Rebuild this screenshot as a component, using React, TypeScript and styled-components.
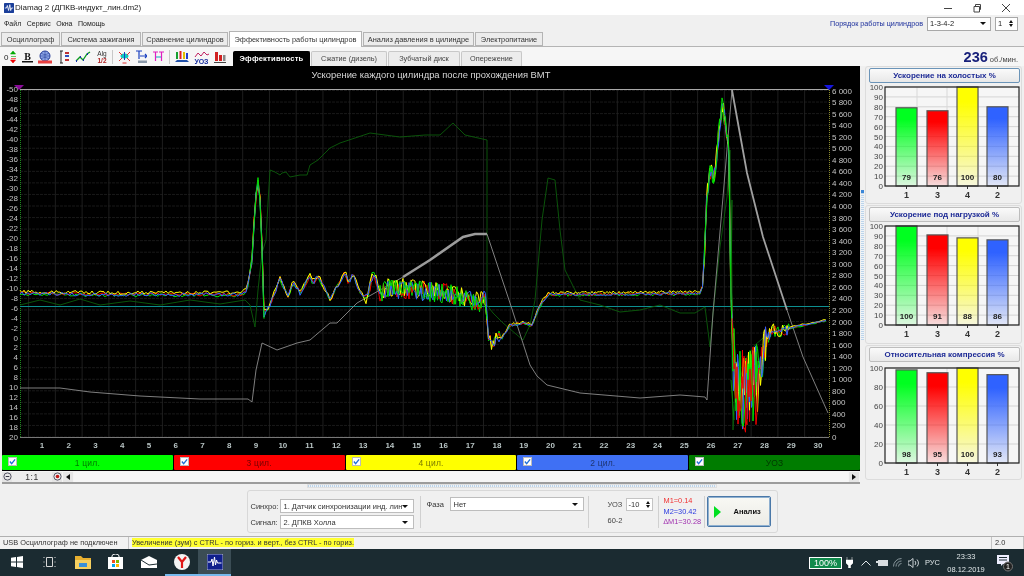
import React from "react";
import styled, { createGlobalStyle } from "styled-components";

const Global = createGlobalStyle`
  html, body { margin: 0; padding: 0; width: 1024px; height: 576px; overflow: hidden; background: #f0f0f0; }
  body { font-family: "Liberation Sans", Arial, sans-serif; font-size: 7.5px; color: #222; }
  #root { width: 1024px; height: 576px; }
`;

/* ---------- page frame ---------- */
const Page = styled.div`
  width: 1024px; height: 576px; display: flex; flex-direction: column; background: #f0f0f0; overflow: hidden;
  filter: blur(0.35px);
`;
const TitleBar = styled.div`
  height: 15px; background: #fff; display: flex; align-items: center; padding: 0 10px 0 4px; gap: 1px; flex: none;
`;
const TitleText = styled.span` font-size: 8px; color: #222; flex: 1; margin-left: 0; `;
const WinControls = styled.div` display: flex; gap: 19px; align-items: center; margin-right: 3px; `;
const MenuRow = styled.div`
  height: 17px; display: flex; align-items: center; padding: 0 4px; flex: none; gap: 5.500px; font-size: 7px;
`;
const MenuItem = styled.span` color: #222; `;
const OrderGroup = styled.div` margin-left: auto; display: flex; align-items: center; gap: 4px; margin-right: 2px; `;
const OrderLabel = styled.span` color: #1c2f9c; font-size: 7.2px; `;
const SmallCombo = styled.div<{ $w: number }>`
  width: ${p => p.$w}px; height: 14px; box-sizing: border-box; background: #fff; border: 1px solid #a8a8a8;
  display: flex; align-items: center; justify-content: space-between; padding: 0 4px 0 2px; font-size: 7.5px; color: #222;
`;
const Caret = styled.i`
  width: 0; height: 0; border-left: 3px solid transparent; border-right: 3px solid transparent; border-top: 3px solid #111; display: block; flex: none;
`;
const TabRow = styled.div` height: 14px; display: flex; padding: 0 0 0 1px; gap: 1px; flex: none; align-items: flex-start; `;
const Tab = styled.div<{ $w: number; $active?: boolean }>`
  width: ${p => p.$w}px; height: ${p => (p.$active ? 16 : 14)}px; margin-top: ${p => (p.$active ? -1 : 0)}px; box-sizing: border-box; display: flex; align-items: center; justify-content: center;
  border: 1px solid #b4b4b4; border-bottom: ${p => (p.$active ? "none" : "1px solid #b4b4b4")};
  background: ${p => (p.$active ? "#fff" : "#ececec")}; font-size: 7.4px; color: #333; white-space: nowrap;
  position: relative; z-index: ${p => (p.$active ? 1 : 0)};
`;
const ToolRow = styled.div`
  height: 20px; flex: none; display: flex; align-items: center; border-top: 1px solid #b4b4b4; background: #f6f6f6; box-sizing: border-box; padding-left: 4px;
`;
const Tools = styled.div` display: flex; align-items: center; gap: 4.500px; width: 229px; height: 18px; flex: none; `;
const ToolSep = styled.i` width: 1px; height: 14px; background: #c8c8c8; display: block; `;
const SubTabs = styled.div` display: flex; align-items: flex-end; height: 18px; gap: 1px; `;
const SubTab = styled.div<{ $w: number; $active?: boolean }>`
  width: ${p => p.$w}px; height: 15px; box-sizing: border-box; display: flex; align-items: center; justify-content: center;
  background: ${p => (p.$active ? "#000" : "#ececec")}; color: ${p => (p.$active ? "#fff" : "#444")};
  font-weight: ${p => (p.$active ? 700 : 400)}; font-size: ${p => (p.$active ? 7.6 : 7.3)}px; letter-spacing: ${p => (p.$active ? "0.2px" : 0)};
  border: 1px solid ${p => (p.$active ? "#000" : "#c8c8c8")}; border-bottom: none; border-radius: 2px 2px 0 0;
`;
const Rpm = styled.div` margin-left: auto; margin-right: 6px; display: flex; align-items: baseline; gap: 2px; `;
const RpmValue = styled.span` font-size: 14.500px; font-weight: 700; color: #18207a; `;
const RpmUnit = styled.span` font-size: 7.5px; color: #444; `;

/* ---------- main ---------- */
const Main = styled.div` display: flex; height: 418px; flex: none; `;
const ChartColumn = styled.div` width: 858px; margin-left: 2px; display: flex; flex-direction: column; flex: none; `;
const ScopePanel = styled.div` height: 389px; background: #000; display: flex; flex-direction: column; flex: none; `;
const ScopeTitle = styled.div`
  height: 18px; flex: none; text-align: center; color: #d8d8d8; font-size: 9.400px; line-height: 18px;
`;
const ScopeSvg = styled.svg` display: block; flex: none; `;
const Legend = styled.div` display: flex; gap: 1px; padding: 0 0 1px; height: 16px; box-sizing: border-box; flex: none; background: #000; `;
const LegendItem = styled.div<{ $bg: string }>`
  flex: 1; background: ${p => p.$bg}; border-radius: 1px; display: flex; align-items: center; position: relative; justify-content: center;
  font-size: 8.500px; color: rgba(0,0,0,0.55); letter-spacing: 0.2px;
`;
const Check = styled.span`
  position: absolute; left: 6px; top: 2px; width: 9px; height: 9px; background: #fff; border: 1px solid #bbb; box-sizing: border-box;
  display: flex; align-items: center; justify-content: center;
`;
const ScrollRow = styled.div`
  height: 11px; flex: none; display: flex; align-items: center; border-bottom: 2px solid #9c9c9c; box-sizing: content-box; background: #f4f4f4;
`;
const RoundBtn = styled.div`
  width: 10px; height: 10px; flex: none; display: flex; align-items: center; justify-content: center; background: #e4e4e4; border: 0; 
`;
const ZoomLabel = styled.div`
  width: 40px; height: 10px; flex: none; text-align: center; font-size: 8.500px; line-height: 11px; background: #ececec; letter-spacing: 0.5px; color: #333;
`;
const ArrowBtn = styled.div`
  width: 10px; height: 10px; flex: none; margin: 0 1px; background: #e6e6e6; display: flex; align-items: center; justify-content: center;
`;
const Track = styled.div` flex: 1; height: 10px; background: #f6f6f6; `;

const Splitter = styled.div`
  width: 4px; flex: none; display: flex; flex-direction: column; padding-top: 124px; box-sizing: border-box;
`;
const SplitStrip = styled.div`
  height: 150px; width: 3px; margin-left: 1px;
  background: repeating-linear-gradient(0deg, #bcd4ea 0 1px, #eef3f8 1px 2px);
  border-top: 3px solid #3a86d8; box-sizing: border-box;
`;
const StatsColumn = styled.div` flex: 1; display: flex; flex-direction: column; margin-left: 1px; margin-right: 2px; gap: 1px; `;
const StatCard = styled.div<{ $h: number }>`
  height: ${p => p.$h}px; flex: none; box-sizing: border-box; border: 1px solid #dcdcdc; border-radius: 3px; padding: 1px 1px 0 3px;
  display: flex; flex-direction: column; gap: 1px;
`;
const StatTitle = styled.div<{ $focus?: boolean }>`
  height: 15px; flex: none; box-sizing: border-box; border: 1px solid ${p => (p.$focus ? "#6b94b8" : "#bdbdbd")}; border-radius: 2px;
  background: linear-gradient(#fafafa, #e8e8e8); text-align: center; line-height: 13px; font-weight: 700; font-size: 8px; color: #1d2a96;
`;
const BarSvg = styled.svg` display: block; flex: none; `;

/* ---------- bottom ---------- */
const Lower = styled.div` height: 52px; flex: none; display: flex; flex-direction: column; align-items: center; `;
const HSplit = styled.div`
  width: 410px; height: 4px; flex: none;
  background: repeating-linear-gradient(90deg, #bcd4ea 0 1px, #eef3f8 1px 2px);
  border: 1px solid #e0e0e0; box-sizing: border-box; margin-bottom: 2px;
`;
const GroupBox = styled.div`
  width: 531px; height: 43px; box-sizing: border-box; border: 1px solid #d8d8d8; border-radius: 3px; display: flex; align-items: center; padding-left: 3px;
`;
const Fields = styled.div` display: flex; flex-direction: column; gap: 2px; width: 166px; padding-top: 5px; flex: none; `;
const FieldRow = styled.div` display: flex; align-items: center; gap: 2px; `;
const FieldLabel = styled.span<{ $w?: number }>` width: ${p => p.$w ?? 27}px; font-size: 7.5px; color: #333; flex: none; `;
const Combo = styled.div<{ $w: number }>`
  width: ${p => p.$w}px; height: 14px; box-sizing: border-box; background: #fff; border: 1px solid #bdbdbd; flex: none;
  display: flex; align-items: center; justify-content: space-between; padding: 0 5px 0 3px; font-size: 7.5px; color: #333; white-space: nowrap;
`;
const VDivider = styled.i<{ $mx: number }>` width: 1px; height: 32px; background: #d0d0d0; display: block; margin: 0 ${p => p.$mx}px; flex: none; `;
const PhaseGroup = styled.div` display: flex; gap: 7px; margin: 0 0 15px 3px; align-items: center; flex: none; `;
const AngleGroup = styled.div` display: grid; grid-template-columns: 18px 27px; row-gap: 5px; align-items: center; margin-left: 15px; font-size: 7.5px; color: #444; flex: none; `;
const Spin = styled.div`
  width: 27px; height: 13px; box-sizing: border-box; border: 1px solid #c4c4c4; background: #fff; display: flex; align-items: center; justify-content: space-between; padding: 0 2px 0 2px; font-size: 7.5px; color: #333;
`;
const Arrows = styled.span` display: flex; flex-direction: column; gap: 1px; `;
const Up = styled.i` display:block; width:0;height:0;border-left:2.5px solid transparent;border-right:2.5px solid transparent;border-bottom:3px solid #111; `;
const Down = styled.i` display:block; width:0;height:0;border-left:2.5px solid transparent;border-right:2.5px solid transparent;border-top:3px solid #111; `;
const Markers = styled.div` width: 40px; display: flex; flex-direction: column; gap: 0.500px; font-size: 7.4px; line-height: 10px; flex: none; `;
const Marker = styled.span<{ $c: string }>` color: ${p => p.$c}; white-space: nowrap; `;
const AnalyzeBtn = styled.div`
  width: 64px; height: 31px; box-sizing: border-box; margin-left: 2px; border: 1px solid #4a78a8; outline: 1px solid #8fb0d0; outline-offset: -2px; border-radius: 2px;
  background: linear-gradient(#f8f8f4, #ecece6); display: flex; align-items: center; font-weight: 700; font-size: 7.5px; color: #111; gap: 13px; padding-left: 6px; flex: none;
`;
const Play = styled.i`
  display:block; width:0;height:0;border-top:6px solid transparent;border-bottom:6px solid transparent;border-left:7px solid #00e020;
`;
const StatusBar = styled.div`
  height: 12px; flex: none; display: flex; align-items: center; border-top: 1px solid #b0b0b0; box-sizing: content-box; font-size: 7.4px; color: #333; background: #f2f2f2;
`;
const StatusCell = styled.div<{ $w?: number }>`
  ${p => (p.$w ? `width:${p.$w}px;flex:none;` : "flex:1;")} height: 100%; box-sizing: border-box; border-right: 1px solid #c4c4c4; padding: 1px 3px; white-space: nowrap; line-height: 10px;
`;
const Hint = styled.span` background: #ffff30; color: #333; `;

/* ---------- taskbar ---------- */
const Taskbar = styled.div` height: 27px; flex: none; background: #1b2b31; display: flex; align-items: stretch; color: #dfe6e8; `;
const TaskSlot = styled.div<{ $active?: boolean; $mark?: boolean }>`
  width: 33px; box-sizing: border-box; display: flex; align-items: center; justify-content: center;
  background: ${p => (p.$active ? "#3b4d55" : "transparent")};
  border-bottom: 2px solid ${p => (p.$active || p.$mark ? "#76b9ed" : "transparent")};
`;
const Tray = styled.div` margin-left: auto; display: flex; align-items: center; `;
const BatteryBadge = styled.div`
  width: 33px; height: 12px; box-sizing: border-box; border: 1px solid #fff; background: #118a4c; color: #fff; font-size: 9px; text-align: center; line-height: 10px;
`;
const TrayIcon = styled.div` width: 16px; display: flex; justify-content: center; align-items: center; `;
const Lang = styled.span` font-size: 7.5px; margin: 0 6px 0 3px; color: #dfe6e8; `;
const Clock = styled.div` display: flex; flex-direction: column; align-items: center; font-size: 7.5px; line-height: 13px; width: 40px; color: #dfe6e8; `;
const Notice = styled.div` width: 38px; display: flex; justify-content: center; `;

/* ---------- chart data ---------- */
type P = [number, number];
const interp = (pts: P[], x: number) => {
  for (let i = 1; i < pts.length; i++) {
    if (x <= pts[i][0]) {
      const [a, b] = [pts[i - 1], pts[i]];
      return a[1] + ((b[1] - a[1]) * (x - a[0])) / Math.max(0.001, b[0] - a[0]);
    }
  }
  return pts[pts.length - 1][1];
};
const rng = (s: number) => () => {
  s |= 0; s = (s + 0x6d2b79f5) | 0;
  let t = Math.imul(s ^ (s >>> 15), 1 | s);
  t = (t + Math.imul(t ^ (t >>> 7), 61 | t)) ^ t;
  return ((t ^ (t >>> 14)) >>> 0) / 4294967296;
};
const line = (pts: P[]) => "M" + pts.map(p => `${p[0]} ${p[1]}`).join("L");

const cylBase: P[] = [
  [20, 293],[120,294],[240,294],[247,290],[252,260],[255,205],[258,182],[261,205],[263,290],[264,315],[270,305],[273,297],[280,278],[288,297],[293,282],[300,293],
  [310,275],[313,283],[318,275],[330,300],[337,287],[345,272],[349,285],[353,272],[360,293],[367,300],[373,273],[380,292],[390,288],[417,290],[447,293],[477,302],
  [486,300],[488,333],[492,348],[497,335],[502,338],[510,325],[523,323],[532,325],[540,305],[548,294],[700,293],[703,285],[707,195],[710,170],[714,180],[717,150],
  [722,105],[726,125],[729,150],[730,240],[732,330],[735,390],[750,390],[757,385],[762,360],[766,342],[772,330],[780,332],[793,327],[827,320],
];
const amp = (x: number) => {
  if (x < 250) return 3.5;
  if (x < 265) return 12;
  if (x < 365) return 5;
  if (x < 380) return 11;
  if (x < 487) return 20;
  if (x < 500) return 12;
  if (x < 535) return 2.5;
  if (x < 703) return 2.8;
  if (x < 730) return 18;
  if (x < 733) return 40;
  if (x < 758) return 85;
  if (x < 766) return 40;
  if (x < 790) return 12;
  return 1.5;
};
const cylPath = (seed: number, off: number, from = 20, to = 827) => {
  const r = rng(seed);
  const pts: P[] = [];
  for (let x = from; x <= to; x += x > 700 && x < 770 ? 1 : x > 380 && x < 790 ? 1.5 : 2) {
    const o = x < 250 || (x > 535 && x < 700) ? off : off * 0.5;
    pts.push([x, +(interp(cylBase, x) + (r() - 0.5) * amp(x) + o).toFixed(1)]);
  }
  return line(pts);
};
const cylColors: [string, number, number][] = [
  ["#00e000", 11, 1.2],["#f00000", 27, 0.4],["#ffff00", 53, -1.3],["#2f62ff", 91, 0.6],
];
const cylPaths = [
  ...cylColors.map(([c, s, o], i) => ({ k: `t${i}`, c, d: cylPath(s, o) })),
  { k: "o1", c: "#00e000", d: cylPath(77, 0.5, 250, 264) },
  { k: "o2", c: "#00e000", d: cylPath(131, 0.5, 380, 487) },
  { k: "o3", c: "#00e000", d: cylPath(177, 0.5, 704, 760) },
  { k: "o4", c: "#f00000", d: cylPath(211, 0.5, 732, 760) },
];

const rpmThin: P[] = [
  [20,388],[60,388],[90,392],[140,396],[200,399],[248,399],[252,402],[256,370],[262,343],[277,350],[297,343],[310,340],[330,323],[337,323],[357,303],[380,290],[403,277],
];
const rpmThick: P[] = [[403,277],[430,260],[463,237],[475,234],[487,234]];
const rpmDown: P[] = [
  [487,234],[490,243],[510,303],[530,365],[537,376],[547,385],[580,393],[640,398],[680,395],[693,396],[705,397],[707,400],[713,313],[723,197],[732,90],
];
const rpmFall1: P[] = [[732,90],[747,173],[763,237],[787,310]];
const rpmFall2: P[] = [[787,310],[803,357],[828,413]];
const uoz: P[] = [
  [20,305],[40,300],[60,305],[80,299],[100,305],[130,301],[160,305],[190,300],[220,304],[245,300],[250,305],[255,327],[258,290],[262,253],[266,240],[268,203],[270,170],
  [275,172],[280,175],[282,173],[286,172],[290,177],[300,175],[307,175],[310,165],[318,160],[330,148],[340,143],[370,133],[400,137],[425,135],[440,135],[453,123],[465,135],
  [487,140],[487,305],[493,313],[503,323],[523,340],[530,325],[535,300],[542,220],[548,178],[555,180],[560,230],[565,270],[580,300],[600,305],[620,312],[640,310],[660,305],
  [680,313],[695,313],[705,307],[710,347],[713,313],[720,247],[727,197],[730,150],[732,280],[732,360],[733,430],[735,400],[745,360],[755,345],[770,332],[800,327],[826,320],
];

const xLabels = Array.from({ length: 30 }, (_, i) => i + 1);
const xPos = (i: number) => 42 + (i - 1) * 26.76;
const leftLabels = Array.from({ length: 36 }, (_, i) => -50 + i * 2);
const rightLabels = Array.from({ length: 31 }, (_, i) => i * 200);
const fmtRpm = (n: number) => (n >= 1000 ? `${Math.floor(n / 1000)} ${String(n % 1000).padStart(3, "0")}` : String(n));

const Scope = () => (
  <ScopeSvg width={858} height={371} viewBox="2 84 858 371">
    {rightLabels.map(v => {
      const y = 437 - (v / 200) * 11.55;
      return <line key={v} x1={20} x2={829} y1={y} y2={y} stroke="#1f1f1f" strokeWidth={0.8} strokeDasharray="3 1" />;
    })}
    {xLabels.map(v => (
      <line key={v} x1={xPos(v) - 13.4} x2={xPos(v) - 13.4} y1={89} y2={437} stroke="#262626" strokeWidth={0.8} />
    ))}
    <line x1={20} x2={829} y1={89.5} y2={89.5} stroke="#a8a8a8" />
    <line x1={20} x2={829} y1={437.5} y2={437.5} stroke="#777" />
    <line x1={20.5} x2={20.5} y1={90} y2={437} stroke="#1d8a1d" strokeDasharray="1 1" />
    <line x1={829.5} x2={829.5} y1={90} y2={437} stroke="#8a8a30" strokeDasharray="1 1" />
    <path d="M14 85h10l-5 5z" fill="#8a0a9a" />
    <path d="M824 85h10l-5 5z" fill="#1414e0" />
    {leftLabels.map((v, i) => (
      <text key={v} x={18} y={89 + i * 9.94 + 3} textAnchor="end" fontSize={8} fill="#c4c4c4" fontFamily="Liberation Sans">{v}</text>
    ))}
    {rightLabels.map(v => (
      <text key={v} x={832} y={437 - (v / 200) * 11.55 + 3} fontSize={8} fill="#c4c4c4" fontFamily="Liberation Sans">{fmtRpm(v)}</text>
    ))}
    {xLabels.map(v => (
      <text key={v} x={xPos(v)} y={448} textAnchor="middle" fontSize={8} fontWeight={700} fill="#b8c4c4" fontFamily="Liberation Sans">{v}</text>
    ))}
    <line x1={20} x2={829} y1={306.5} y2={306.5} stroke="#0d8f8f" />
    <path d={line(uoz)} fill="none" stroke="#0b5c0b" strokeWidth={0.9} />
    <path d={line(rpmThin)} fill="none" stroke="#8c8c8c" strokeWidth={0.9} />
    <path d={line(rpmThick)} fill="none" stroke="#9c9c9c" strokeWidth={2.6} />
    <path d={line(rpmDown)} fill="none" stroke="#8c8c8c" strokeWidth={0.9} />
    <path d={line(rpmFall1)} fill="none" stroke="#a0a0a0" strokeWidth={1.8} />
    <path d={line(rpmFall2)} fill="none" stroke="#8c8c8c" strokeWidth={0.9} />
    {cylPaths.map(p => <path key={p.k} d={p.d} fill="none" stroke={p.c} strokeWidth={1} />)}
    <path d="M732 200L731 300M731 380L734 420" stroke="#0c8a0c" strokeWidth={1} />
  </ScopeSvg>
);

/* ---------- bar charts ---------- */
const barX = [27, 58, 88, 118];
const barColors = ["#00ff20", "#ff0000", "#ffff00", "#2f62ff"];
const barNames = ["1", "3", "4", "2"];
const BarChart = ({ id, values, top, bottom, every }: { id: string; values: number[]; top: number; bottom: number; every: number }) => {
  const ys = (v: number) => bottom - ((bottom - top) * v) / 100;
  const ticks = Array.from({ length: 100 / every + 1 }, (_, i) => i * every);
  return (
    <BarSvg width={151} height={bottom + 18} viewBox={`0 0 151 ${bottom + 18}`}>
      <defs>
        {barColors.map((c, i) => (
          <linearGradient key={c} id={`${id}${i}`} x1="0" y1="0" x2="0" y2="1">
            <stop offset="0.15" stopColor={c} />
            <stop offset="1" stopColor={c} stopOpacity={0.1} />
          </linearGradient>
        ))}
      </defs>
      <rect x={16} y={top} width={134} height={bottom - top} fill="#f6f6f6" />
      {ticks.map(t => (
        <g key={t}>
          <line x1={16} x2={150} y1={ys(t)} y2={ys(t)} stroke="#d4d4d4" />
          <text x={14} y={ys(t) + 3} textAnchor="end" fontSize={8} fill="#444" fontFamily="Liberation Sans">{t}</text>
        </g>
      ))}
      {[48, 78, 109].map(x => <line key={x} x1={x} x2={x} y1={top} y2={bottom} stroke="#d8d8d8" />)}
      {values.map((v, i) => (
        <g key={i}>
          <rect x={barX[i]} y={ys(v)} width={21} height={bottom - ys(v)} fill={`url(#${id}${i})`} stroke="#555" strokeWidth={1.2} />
          <text x={barX[i] + 10.5} y={bottom - 6} textAnchor="middle" fontSize={8} fontWeight={700} fill="#222" fontFamily="Liberation Sans">{v}</text>
          <text x={barX[i] + 10.5} y={bottom + 12} textAnchor="middle" fontSize={9} fontWeight={700} fill="#333" fontFamily="Liberation Sans">{barNames[i]}</text>
          <line x1={barX[i] + 10.5} x2={barX[i] + 10.5} y1={bottom} y2={bottom + 3} stroke="#333" />
        </g>
      ))}
      <rect x={16} y={top} width={134} height={bottom - top} fill="none" stroke="#222" strokeWidth={1.2} />
    </BarSvg>
  );
};

/* ---------- icons ---------- */
const AppIcon = ({ s = 10 }: { s?: number }) => (
  <svg width={s} height={s} viewBox="0 0 12 12">
    <rect width="12" height="12" rx="1" fill="#1b3f9a" />
    <path d="M1 6h2l1-3 1.5 6L7 2l1 7 1-3h2" fill="none" stroke="#fff" strokeWidth="1" />
  </svg>
);
const Ic = ({ w = 15, children }: { w?: number; children: React.ReactNode }) => (
  <svg width={w} height={14} viewBox={`0 0 ${w} 14`}>{children}</svg>
);
const ToolIcons = () => (
  <Tools>
    <Ic w={13}>
      <text x="0" y="10" fontSize="8" fill="#222" fontFamily="Liberation Sans">0</text>
      <path d="M9 1l2.500 3h-5zM7 6.500h5" stroke="#0a0" fill="#0a0" strokeWidth=".6" />
      <path d="M9 13l2.500-3h-5zM7 8.500h5" stroke="#e00" fill="#e00" strokeWidth=".6" />
    </Ic>
    <Ic w={11}>
      <text x="5.500" y="10" textAnchor="middle" fontSize="10" fontWeight="700" fill="#111" fontFamily="Liberation Serif">B</text>
      <rect x="0" y="11" width="11" height="1.500" fill="#111" />
    </Ic>
    <Ic w={16}>
      <circle cx="8" cy="6" r="5" fill="#8fa8e8" stroke="#2a3f9a" />
      <path d="M3 6h10M8 1v10M4 3c3 2 5 2 8 0M4 9c3-2 5-2 8 0" stroke="#2a3f9a" fill="none" strokeWidth=".6" />
      <rect x="1" y="10.500" width="14" height="3" fill="#e84040" />
    </Ic>
    <Ic w={13}>
      <path d="M2 1h3M3 1v12M2 13h3" stroke="#222" fill="none" />
      <rect x="7" y="2" width="4" height="2" fill="#c03030" /><rect x="7" y="5" width="4" height="2" fill="#3050c0" /><rect x="7" y="9" width="4" height="2" fill="#c03030" />
    </Ic>
    <Ic w={16}>
      <path d="M1 11l4-4 3 3 4-6 3-2" stroke="#0a9a20" fill="none" strokeWidth="1.300" />
      <path d="M1 11h1M5 7h1M8 10h1M12 4h1" stroke="#1a30b0" strokeWidth="2" />
    </Ic>
    <Ic w={12}>
      <text x="6" y="6" textAnchor="middle" fontSize="6.500" fill="#333" fontFamily="Liberation Sans">Alg</text>
      <text x="6" y="13" textAnchor="middle" fontSize="6.500" fill="#b02020" fontWeight="700" fontFamily="Liberation Sans">1/2</text>
    </Ic>
    <ToolSep />
    <Ic w={13}>
      <ellipse cx="6.500" cy="6" rx="4" ry="2.500" fill="#10c8c0" />
      <path d="M1 2l3 3M12 2l-3 3M1 11l3-3M12 11l-3-3M4.500 13h4" stroke="#e03030" fill="none" />
      <path d="M6.500 2v8" stroke="#1a40c0" />
    </Ic>
    <Ic w={12}>
      <path d="M1 1h6M4 1v8M5 6h7M12 6l-2-2M12 6l-2 2" stroke="#1a40c0" fill="none" strokeWidth="1.200" />
      <rect x="3" y="10.500" width="9" height="2.500" fill="#8a98a8" />
    </Ic>
    <Ic w={13}>
      <path d="M1 2h5M3.500 2v9" stroke="#e020c0" strokeWidth="1.200" fill="none" />
      <path d="M7 2h5M9.500 2v9" stroke="#e020c0" strokeWidth="1.200" fill="none" />
      <path d="M4 7h5" stroke="#10a8c0" />
    </Ic>
    <ToolSep />
    <Ic w={15}>
      <rect x="1" y="2" width="2" height="7" fill="#18a030" /><rect x="4.500" y="1" width="2" height="8" fill="#e02020" /><rect x="8" y="2" width="2" height="7" fill="#e0c000" /><rect x="11" y="3" width="2" height="6" fill="#2040d0" />
      <path d="M0 12l2-2h10l2 2z" fill="#2050a8" />
    </Ic>
    <Ic w={15}>
      <path d="M1 7l3-4 3 3 3-4 3 3 2-1" stroke="#c02060" fill="none" />
      <text x="7.500" y="14" textAnchor="middle" fontSize="7" fontWeight="700" fill="#1a30a0" fontFamily="Liberation Sans">УОЗ</text>
    </Ic>
    <Ic w={12}>
      <rect x="1" y="2" width="3" height="9" fill="#d02020" /><rect x="5" y="5" width="3" height="6" fill="#d02020" /><rect x="9" y="5" width="2.500" height="6" fill="#888" />
      <rect x="0" y="12" width="12" height="1" fill="#444" />
    </Ic>
  </Tools>
);
const CheckMark = () => (
  <svg width="7" height="7" viewBox="0 0 8 8"><path d="M1 4l2 2.500L7 1.500" fill="none" stroke="#1f6fd8" strokeWidth="1.500" /></svg>
);

const legend: [string, string][] = [
  ["#00ff00", "1 цил."],["#ff0000", "3 цил."],["#ffff00", "4 цил."],["#3f70f4", "2 цил."],["#007c00", "УОЗ"],
];

export default function App() {
  return (
    <Page>
      <Global />
      <TitleBar>
        <AppIcon />
        <TitleText>Diamag 2 (ДПКВ-индукт_лин.dm2)</TitleText>
        <WinControls>
          <svg width="10" height="10" viewBox="0 0 10 10"><path d="M1 5.500h8" stroke="#444" /></svg>
          <svg width="10" height="10" viewBox="0 0 10 10"><path d="M2 3.500h5.500v5.500h-5.500zM3.500 3.500v-2h5v5h-1.500" fill="none" stroke="#444" /></svg>
          <svg width="10" height="10" viewBox="0 0 10 10"><path d="M1 1l8 8M9 1l-8 8" stroke="#444" /></svg>
        </WinControls>
      </TitleBar>
      <MenuRow>
        <MenuItem>Файл</MenuItem>
        <MenuItem>Сервис</MenuItem>
        <MenuItem>Окна</MenuItem>
        <MenuItem>Помощь</MenuItem>
        <OrderGroup>
          <OrderLabel>Порядок работы цилиндров</OrderLabel>
          <SmallCombo $w={64}>1-3-4-2<Caret /></SmallCombo>
          <SmallCombo $w={23}>1<Arrows><Up /><Down /></Arrows></SmallCombo>
        </OrderGroup>
      </MenuRow>
      <TabRow>
        <Tab $w={59}>Осциллограф</Tab>
        <Tab $w={80}>Система зажигания</Tab>
        <Tab $w={86}>Сравнение цилиндров</Tab>
        <Tab $w={133} $active>Эффективность работы цилиндров</Tab>
        <Tab $w={111}>Анализ давления в цилиндре</Tab>
        <Tab $w={68}>Электропитание</Tab>
      </TabRow>
      <ToolRow>
        <ToolIcons />
        <SubTabs>
          <SubTab $w={77} $active>Эффективность</SubTab>
          <SubTab $w={76}>Сжатие (дизель)</SubTab>
          <SubTab $w={72}>Зубчатый диск</SubTab>
          <SubTab $w={61}>Опережение</SubTab>
        </SubTabs>
        <Rpm><RpmValue>236</RpmValue><RpmUnit>об./мин.</RpmUnit></Rpm>
      </ToolRow>
      <Main>
        <ChartColumn>
          <ScopePanel>
            <ScopeTitle>Ускорение каждого цилиндра после прохождения ВМТ</ScopeTitle>
            <Scope />
          </ScopePanel>
          <Legend>
            {legend.map(([bg, t]) => (
              <LegendItem key={t} $bg={bg}><Check><CheckMark /></Check>{t}</LegendItem>
            ))}
          </Legend>
          <ScrollRow>
            <RoundBtn><svg width="9" height="9" viewBox="0 0 10 10"><circle cx="5" cy="5" r="4" fill="#e8e8e8" stroke="#445" /><path d="M3 5h4" stroke="#223" /></svg></RoundBtn>
            <ZoomLabel>1:1</ZoomLabel>
            <RoundBtn><svg width="9" height="9" viewBox="0 0 10 10"><circle cx="5" cy="5" r="4" fill="#eee" stroke="#445" /><circle cx="5" cy="5" r="2" fill="#c01818" /></svg></RoundBtn>
            <ArrowBtn><svg width="4" height="6" viewBox="0 0 4 6"><path d="M4 0v6L0 3z" fill="#111" /></svg></ArrowBtn>
            <Track />
            <ArrowBtn><svg width="4" height="6" viewBox="0 0 4 6"><path d="M0 0v6l4-3z" fill="#111" /></svg></ArrowBtn>
          </ScrollRow>
        </ChartColumn>
        <Splitter><SplitStrip /></Splitter>
        <StatsColumn>
          <StatCard $h={138}>
            <StatTitle $focus>Ускорение на холостых %</StatTitle>
            <BarChart id="a" values={[79, 76, 100, 80]} top={3} bottom={102} every={10} />
          </StatCard>
          <StatCard $h={139}>
            <StatTitle>Ускорение под нагрузкой %</StatTitle>
            <BarChart id="b" values={[100, 91, 88, 86]} top={3} bottom={102} every={10} />
          </StatCard>
          <StatCard $h={135}>
            <StatTitle>Относительная компрессия %</StatTitle>
            <BarChart id="c" values={[98, 95, 100, 93]} top={5} bottom={100} every={20} />
          </StatCard>
        </StatsColumn>
      </Main>
      <Lower>
        <HSplit />
        <GroupBox>
          <Fields>
            <FieldRow><FieldLabel>Синхро:</FieldLabel><Combo $w={134}>1.  Датчик синхронизации инд. лин<Caret /></Combo></FieldRow>
            <FieldRow><FieldLabel>Сигнал:</FieldLabel><Combo $w={134}>2.  ДПКВ Холла<Caret /></Combo></FieldRow>
          </Fields>
          <VDivider $mx={3} />
          <PhaseGroup><FieldLabel $w={16}>Фаза</FieldLabel><Combo $w={134}>Нет<Caret /></Combo></PhaseGroup>
          <VDivider $mx={4} />
          <AngleGroup>
            <span>УОЗ</span><Spin>-10<Arrows><Up /><Down /></Arrows></Spin>
            <span>60-2</span><span />
          </AngleGroup>
          <VDivider $mx={5} />
          <Markers>
            <Marker $c="#f03030">M1=0.14</Marker>
            <Marker $c="#2838e0">M2=30.42</Marker>
            <Marker $c="#a030b0">∆M1=30.28</Marker>
          </Markers>
          <VDivider $mx={0} />
          <AnalyzeBtn><Play />Анализ</AnalyzeBtn>
        </GroupBox>
      </Lower>
      <StatusBar>
        <StatusCell $w={129}>USB Осциллограф не подключен</StatusCell>
        <StatusCell><Hint>Увеличение (зум) с CTRL - по гориз. и верт., без CTRL - по гориз.</Hint></StatusCell>
        <StatusCell $w={32}>2.0</StatusCell>
      </StatusBar>
      <Taskbar>
        <TaskSlot>
          <svg width="12" height="12" viewBox="0 0 12 12"><path d="M0 1.700L5 1v4.500H0zM6 .9L12 0v5.500H6zM0 6.500h5V11L0 10.300zM6 6.500h6V12l-6-.9z" fill="#fff" /></svg>
        </TaskSlot>
        <TaskSlot>
          <svg width="13" height="12" viewBox="0 0 13 12"><path d="M3.500 1.500h6v9h-6zM.5 1.500h1M.5 10.500h1M11.500 1.500h1M11.500 10.500h1M.5 6h1M11.500 6h1" fill="none" stroke="#d8d8d8" /></svg>
        </TaskSlot>
        <TaskSlot>
          <svg width="16" height="14" viewBox="0 0 16 14"><path d="M0 1h6l2 2h8v11H0z" fill="#e8b030" /><rect x="0" y="5" width="16" height="9" fill="#f6d060" /><rect x="4" y="8" width="8" height="4" fill="#3a90d8" /></svg>
        </TaskSlot>
        <TaskSlot>
          <svg width="15" height="15" viewBox="0 0 15 15"><rect x="0" y="3" width="15" height="12" fill="#fff" /><path d="M4 5V2a3.500 2 0 0 1 7 0v3" stroke="#fff" fill="none" /><rect x="4" y="6" width="3" height="3" fill="#f25022" /><rect x="8" y="6" width="3" height="3" fill="#7fba00" /><rect x="4" y="10" width="3" height="3" fill="#00a4ef" /><rect x="8" y="10" width="3" height="3" fill="#ffb900" /></svg>
        </TaskSlot>
        <TaskSlot>
          <svg width="16" height="12" viewBox="0 0 16 12"><path d="M0 4l8-4 8 4v8H0z" fill="#fff" /><path d="M0 4l8 5 8-1" fill="none" stroke="#1b2b31" /></svg>
        </TaskSlot>
        <TaskSlot $mark>
          <svg width="16" height="16" viewBox="0 0 16 16"><circle cx="8" cy="8" r="8" fill="#f4f4f4" /><path d="M4 3l4 5 4-5M8 8v6" stroke="#e01818" strokeWidth="2.200" fill="none" /></svg>
        </TaskSlot>
        <TaskSlot $active>
          <svg width="16" height="16" viewBox="0 0 16 16"><rect width="16" height="16" rx="1.500" fill="#10208c" stroke="#ccd" strokeWidth=".8" /><path d="M1 8h3l1-3 1 7 1.500-9 1 8 1-5 1 3h4" fill="none" stroke="#fff" /></svg>
        </TaskSlot>
        <Tray>
          <BatteryBadge>100%</BatteryBadge>
          <TrayIcon><svg width="7" height="11" viewBox="0 0 7 11"><path d="M1 0v3M6 0v3M0 3h7v3l-2 2H2L0 6zM2.500 8h2v3h-2z" fill="#fff" stroke="#fff" strokeWidth=".5" /></svg></TrayIcon>
          <TrayIcon><svg width="10" height="6" viewBox="0 0 10 6"><path d="M.5 5.500L5 1l4.500 4.500" stroke="#dfe6e8" fill="none" /></svg></TrayIcon>
          <TrayIcon><svg width="12" height="8" viewBox="0 0 12 8"><rect x="2" y="1" width="10" height="6" fill="#d8dde0" /><rect x="0" y="2" width="2" height="2" fill="#d8dde0" /></svg></TrayIcon>
          <TrayIcon><svg width="10" height="9" viewBox="0 0 10 9"><path d="M.5 8.500a8 8 0 0 1 8-8M3 8.500a5.500 5.500 0 0 1 5.500-5.500M5.500 8.500a3 3 0 0 1 3-3" fill="none" stroke="#88969c" /></svg></TrayIcon>
          <TrayIcon><svg width="12" height="10" viewBox="0 0 12 10"><path d="M0 3h2l3-2.500v9L2 7H0zM7 3a3 3 0 0 1 0 4M9 1.500a5 5 0 0 1 0 7" fill="none" stroke="#c8d0d4" /></svg></TrayIcon>
          <Lang>РУС</Lang>
          <Clock><span>23:33</span><span>08.12.2019</span></Clock>
          <Notice>
            <svg width="18" height="18" viewBox="0 0 18 18"><path d="M1 1h12v9H7l-2 2v-2H1z" fill="#eef" /><path d="M3 3.500h8M3 6h8" stroke="#1b2b31" /><circle cx="12" cy="12.500" r="4.500" fill="#222" stroke="#777" /><text x="12" y="15" textAnchor="middle" fontSize="7" fill="#fff" fontFamily="Liberation Sans">1</text></svg>
          </Notice>
        </Tray>
      </Taskbar>
    </Page>
  );
}
